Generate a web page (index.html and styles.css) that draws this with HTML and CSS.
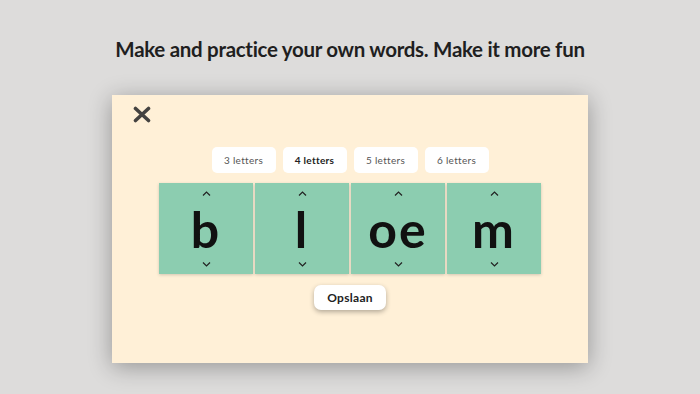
FILE: index.html
```html
<!DOCTYPE html>
<html>
<head>
<meta charset="utf-8">
<link rel="stylesheet" href="styles.css">
</head>
<body>
<div class="page">
  <h1 class="title">Make and practice your own words. Make it more fun</h1>
  <div class="panel">
    <div class="close-row">
      <svg class="close" width="18" height="17" viewBox="0 0 18 17">
        <path d="M2.5 2.5 L15.5 14.5 M15.5 2.5 L2.5 14.5" stroke="#444240" stroke-width="3.6" stroke-linecap="round" fill="none"/>
      </svg>
    </div>
    <div class="tabs">
      <div class="tab">3 letters</div>
      <div class="tab active">4 letters</div>
      <div class="tab">5 letters</div>
      <div class="tab">6 letters</div>
    </div>
    <div class="tiles">
      <div class="tile">
        <svg class="chev" width="9" height="5" viewBox="0 0 9 5"><path d="M1 4.5 L4.5 1 L8 4.5" stroke="#222" stroke-width="1.2" fill="none"/></svg>
        <span class="letter">b</span>
        <svg class="chev" width="9" height="5" viewBox="0 0 9 5"><path d="M1 0.5 L4.5 4 L8 0.5" stroke="#222" stroke-width="1.2" fill="none"/></svg>
      </div>
      <div class="tile">
        <svg class="chev" width="9" height="5" viewBox="0 0 9 5"><path d="M1 4.5 L4.5 1 L8 4.5" stroke="#222" stroke-width="1.2" fill="none"/></svg>
        <span class="letter">l</span>
        <svg class="chev" width="9" height="5" viewBox="0 0 9 5"><path d="M1 0.5 L4.5 4 L8 0.5" stroke="#222" stroke-width="1.2" fill="none"/></svg>
      </div>
      <div class="tile">
        <svg class="chev" width="9" height="5" viewBox="0 0 9 5"><path d="M1 4.5 L4.5 1 L8 4.5" stroke="#222" stroke-width="1.2" fill="none"/></svg>
        <span class="letter">oe</span>
        <svg class="chev" width="9" height="5" viewBox="0 0 9 5"><path d="M1 0.5 L4.5 4 L8 0.5" stroke="#222" stroke-width="1.2" fill="none"/></svg>
      </div>
      <div class="tile">
        <svg class="chev" width="9" height="5" viewBox="0 0 9 5"><path d="M1 4.5 L4.5 1 L8 4.5" stroke="#222" stroke-width="1.2" fill="none"/></svg>
        <span class="letter">m</span>
        <svg class="chev" width="9" height="5" viewBox="0 0 9 5"><path d="M1 0.5 L4.5 4 L8 0.5" stroke="#222" stroke-width="1.2" fill="none"/></svg>
      </div>
    </div>
    <div class="actions">
      <button class="save">Opslaan</button>
    </div>
  </div>
</div>
</body>
</html>
```

FILE: styles.css
```css
* { box-sizing: border-box; }
html, body {
  margin: 0;
  padding: 0;
  width: 700px;
  height: 394px;
  overflow: hidden;
  background: #dddcdb;
  font-family: "Lato", "Open Sans", sans-serif;
}
.page {
  display: flex;
  flex-direction: column;
  align-items: center;
  padding-top: 36px;
}
.title {
  margin: 0;
  font-size: 20.5px;
  line-height: 26px;
  font-weight: 700;
  color: #1f1f1f;
  letter-spacing: -0.3px;
}
.panel {
  margin-top: 33px;
  width: 476px;
  height: 268px;
  background: #fff0d7;
  box-shadow: 0 4px 22px rgba(0,0,0,0.32);
  display: flex;
  flex-direction: column;
  align-items: center;
}
.close-row {
  align-self: stretch;
  padding: 11px 0 0 21px;
  height: 52px;
}
.close { display: block; }
.tabs {
  display: flex;
  gap: 7px;
}
.tab {
  width: 64px;
  height: 26px;
  background: #fff;
  border-radius: 5px;
  display: flex;
  align-items: center;
  justify-content: center;
  font-size: 10px;
  color: #555;
  letter-spacing: 0.3px;
}
.tab.active {
  font-weight: 700;
  color: #222;
}
.tiles {
  margin-top: 10px;
  display: flex;
  gap: 2px;
}
.tile {
  width: 94px;
  height: 91px;
  background: #8ccdb0;
  box-shadow: 0 1px 3px rgba(0,0,0,0.18);
  display: flex;
  flex-direction: column;
  align-items: center;
  justify-content: space-between;
  padding: 8px 0 7px;
}
.chev { display: block; }
.letter {
  font-size: 50px;
  line-height: 50px;
  font-weight: 700;
  color: #111;
  letter-spacing: 2px;
}
.actions {
  margin-top: 11px;
}
.save {
  width: 72px;
  height: 25px;
  border: none;
  border-radius: 7px;
  background: #fff;
  box-shadow: 0 2px 5px rgba(0,0,0,0.3);
  font-family: "Lato", sans-serif;
  font-size: 12px;
  font-weight: 700;
  color: #222;
  letter-spacing: 0.3px;
  padding: 0;
}
```
